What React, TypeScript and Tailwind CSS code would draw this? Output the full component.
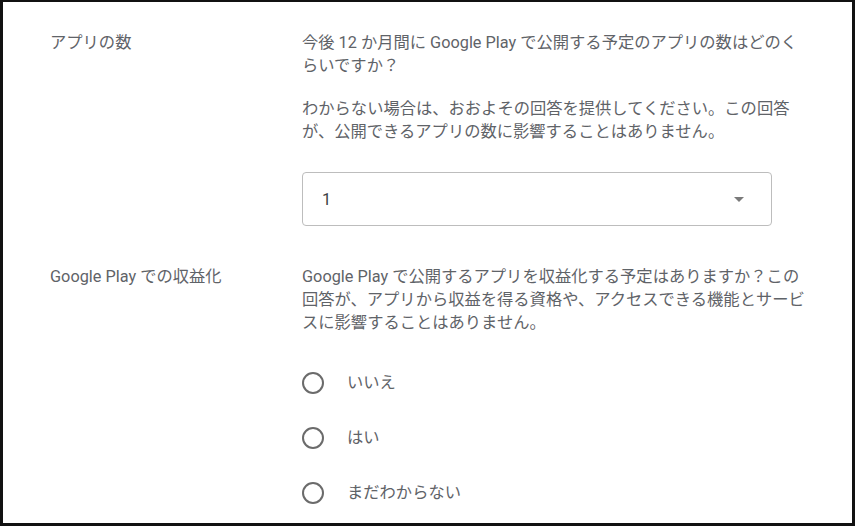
import React from 'react';

const font = { fontFamily: 'Roboto, "Noto Sans CJK JP", sans-serif' };

const RadioOption: React.FC<{ label: string }> = ({ label }) => (
  <label className="flex h-[55px] items-center gap-[23px]">
    <span className="box-border h-[22px] w-[22px] rounded-full border-2 border-[#6b6b6b]" />
    <span>{label}</span>
  </label>
);

export default function App() {
  return (
    <div
      className="box-border h-[526px] w-[855px] border-t-2 border-r-[3px] border-b-[3px] border-l-[3px] border-[#111] bg-white text-[16.3px] leading-[23px] text-[#5f6368]"
      style={font}
    >
      <div className="grid grid-cols-[252px_520px] pt-[29px] pl-[47px]">
        <div>アプリの数</div>
        <div className="flex flex-col whitespace-nowrap">
          <p>
            今後 12 か月間に Google Play で公開する予定のアプリの数はどのく
            <br />
            らいですか？
          </p>
          <p className="mt-[20px]">
            わからない場合は、おおよその回答を提供してください。この回答
            <br />
            が、公開できるアプリの数に影響することはありません。
          </p>
          <div className="mt-[29px] flex h-[54px] w-[470px] items-center justify-between rounded-[4px] border border-[#bdbdbd] pr-[27px] pl-[19px] text-[#3c4043]">
            <span>1</span>
            <svg width="10" height="5" viewBox="0 0 10 5">
              <path d="M0 0h10L5 5z" fill="#7a7a7a" />
            </svg>
          </div>
        </div>

        <div className="mt-[39px]">Google Play での収益化</div>
        <div className="mt-[39px] flex flex-col whitespace-nowrap">
          <p>
            Google Play で公開するアプリを収益化する予定はありますか？この
            <br />
            回答が、アプリから収益を得る資格や、アクセスできる機能とサービ
            <br />
            スに影響することはありません。
          </p>
          <div className="mt-[21px] flex flex-col">
            <RadioOption label="いいえ" />
            <RadioOption label="はい" />
            <RadioOption label="まだわからない" />
          </div>
        </div>
      </div>
    </div>
  );
}
